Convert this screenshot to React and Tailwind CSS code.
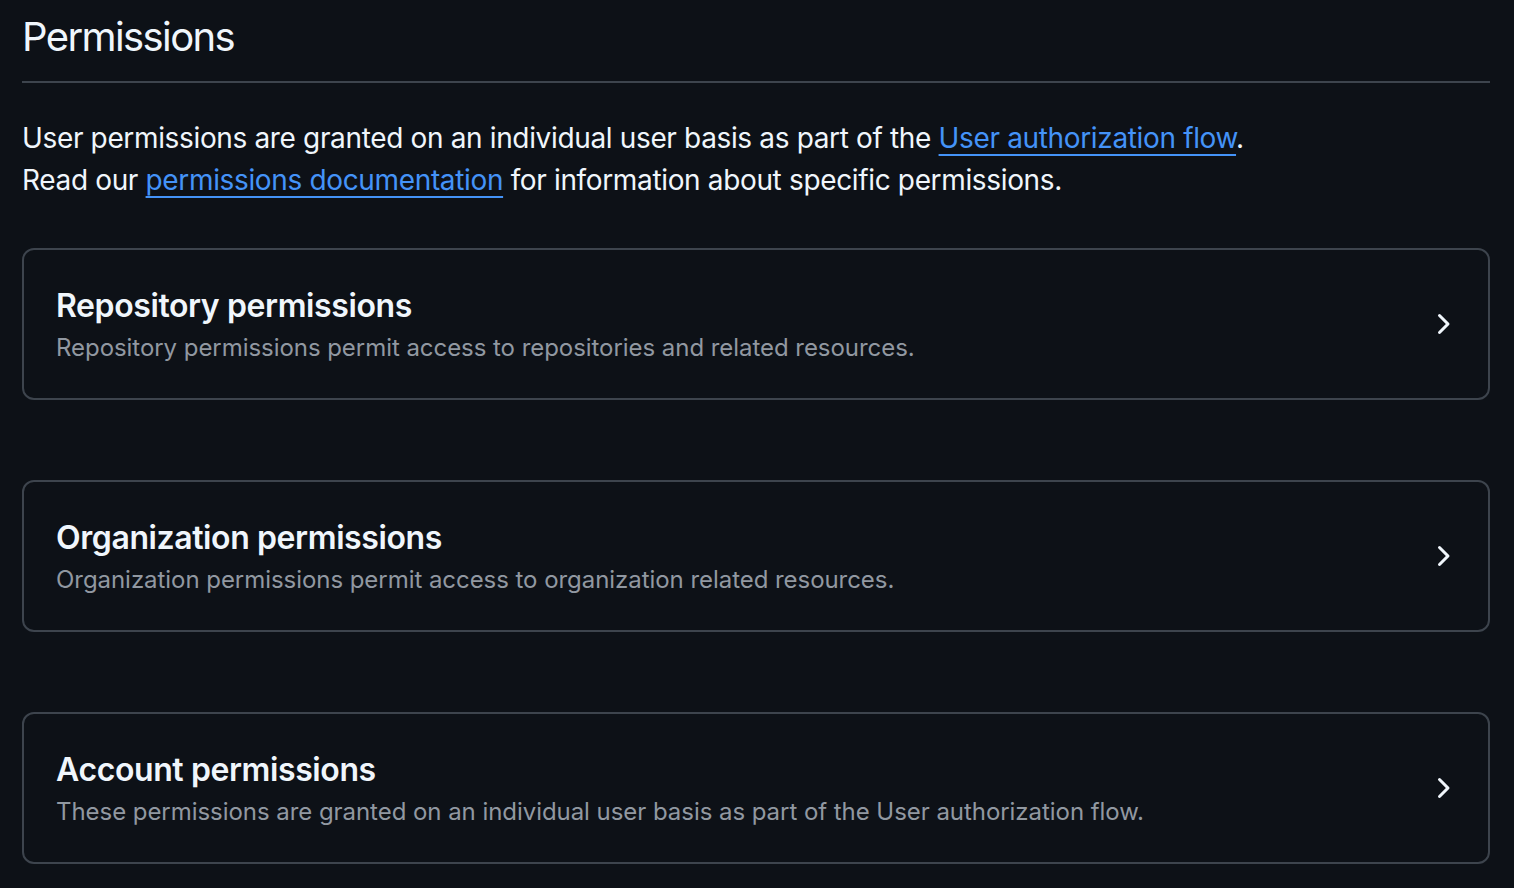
const sections = [
  {
    title: "Repository permissions",
    text: "Repository permissions permit access to repositories and related resources.",
  },
  {
    title: "Organization permissions",
    text: "Organization permissions permit access to organization related resources.",
  },
  {
    title: "Account permissions",
    text: "These permissions are granted on an individual user basis as part of the User authorization flow.",
  },
];

function ChevronRight() {
  return (
    <svg viewBox="0 0 16 16" width="32" height="32" fill="currentColor" className="shrink-0 text-[#f0f6fc] mr-[-2px]">
      <path d="M6.22 3.22a.75.75 0 0 1 1.06 0l4.25 4.25a.75.75 0 0 1 0 1.06l-4.25 4.25a.751.751 0 0 1-1.042-.018.751.751 0 0 1-.018-1.042L9.94 8 6.22 4.28a.75.75 0 0 1 0-1.06Z" />
    </svg>
  );
}

export default function App() {
  return (
    <div
      className="min-h-[888px] bg-[#0d1117] text-[#f0f6fc] pl-[22px] pr-[24px] pt-[7px]"
      style={{ fontFamily: "Inter, 'Noto Sans', 'Liberation Sans', sans-serif" }}
    >
      <div className="border-b-2 border-[#3d444d] pb-[14px]">
        <h2 className="text-[40px] leading-[60px] font-normal tracking-[-1.6px]">Permissions</h2>
      </div>

      <p className="mt-[34px] text-[28px] leading-[42px] tracking-[-0.35px]">
        User permissions are granted on an individual user basis as part of the{" "}
        <a href="#" className="text-[#4493f8] underline decoration-2 underline-offset-[6px]">
          User authorization flow
        </a>
        .
        <br />
        Read our{" "}
        <a href="#" className="text-[#4493f8] underline decoration-2 underline-offset-[6px]">
          permissions documentation
        </a>{" "}
        for information about specific permissions.
      </p>

      <div className="mt-[47px] flex flex-col gap-[80px]">
        {sections.map((s) => (
          <div
            key={s.title}
            className="flex items-center justify-between rounded-[12px] border-2 border-[#3d444d] pl-[32px] pr-[32px] py-[32px]"
          >
            <div>
              <div className="text-[32px] leading-[48px] font-semibold tracking-[-0.4px]">{s.title}</div>
              <div className="text-[24px] leading-[36px] text-[#9198a1] tracking-[-0.05px]">{s.text}</div>
            </div>
            <ChevronRight />
          </div>
        ))}
      </div>
    </div>
  );
}
